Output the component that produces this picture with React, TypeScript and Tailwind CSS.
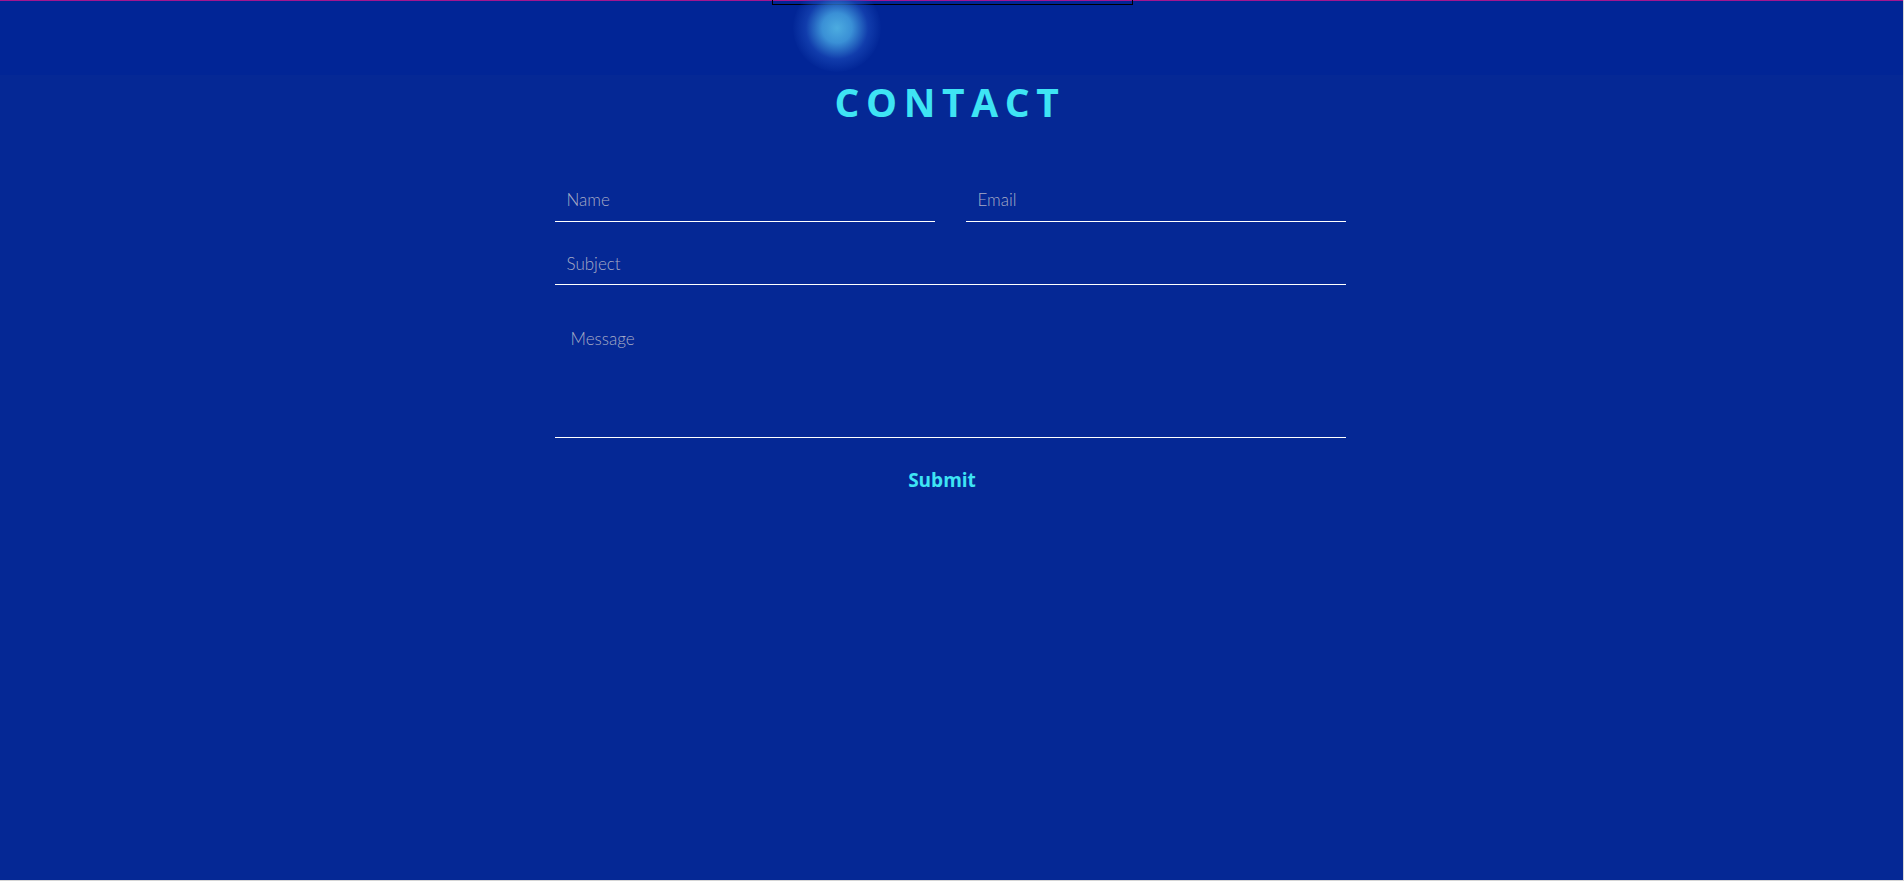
import React, { useState } from 'react';

const App: React.FC = () => {
  const [name, setName] = useState('');
  const [email, setEmail] = useState('');
  const [subject, setSubject] = useState('');
  const [message, setMessage] = useState('');

  const fieldClass =
    'w-full bg-transparent border-b border-white px-3 pb-[8px] text-[17px] font-light text-white placeholder:text-[#a6abc6] outline-none';

  return (
    <div className="min-h-[881px] bg-[#d6d6d6] font-['Lato',sans-serif]">
      <div className="h-[880px] w-[1903px] bg-[#052895] flex flex-col">
        {/* header strip */}
        <header className="relative h-[75px] bg-[#012596] border-t border-[#a4168f]">
          <div className="ml-[772px] w-[361px] h-[5px] -mt-px border border-t-0 border-black" />
          <div className="absolute left-[793px] top-[-17px] w-[88px] h-[88px] rounded-full bg-[radial-gradient(circle,#4cace0_0%,#3a90d6_24%,rgba(30,80,190,0.55)_50%,rgba(1,37,150,0)_72%)]" />
        </header>

        <main className="flex justify-center pr-[3px]">
          <div className="w-[791px] flex flex-col">
            <h1 className="mt-[3px] text-center text-[39px] leading-[48px] font-bold tracking-[0.17em] text-[#3ee4f4] font-['Open_Sans',sans-serif]">
              CONTACT
            </h1>

            <form className="mt-[61px] flex flex-col" onSubmit={e => e.preventDefault()}>
              <div className="flex gap-[31px]">
                <input
                  className={fieldClass}
                  placeholder="Name"
                  value={name}
                  onChange={e => setName(e.target.value)}
                />
                <input
                  className={fieldClass}
                  placeholder="Email"
                  value={email}
                  onChange={e => setEmail(e.target.value)}
                />
              </div>
              <input
                className={`${fieldClass} mt-[29px]`}
                placeholder="Subject"
                value={subject}
                onChange={e => setSubject(e.target.value)}
              />
              <textarea
                className="h-[153px] resize-none w-full bg-transparent border-b border-white px-4 pt-[41px] text-[17px] font-light text-white placeholder:text-[#a6abc6] outline-none"
                placeholder="Message"
                value={message}
                onChange={e => setMessage(e.target.value)}
              />
              <button
                type="submit"
                className="mt-[28px] mr-[16px] self-center text-[19px] font-bold text-[#3ee4f4] font-['Open_Sans',sans-serif]"
              >
                Submit
              </button>
            </form>
          </div>
        </main>
      </div>
    </div>
  );
};

export default App;
